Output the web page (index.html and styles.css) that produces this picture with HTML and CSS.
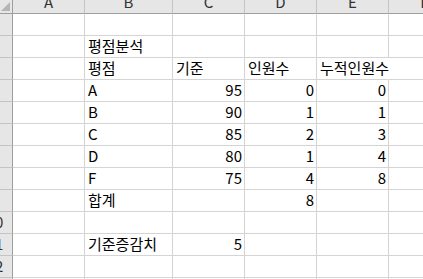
FILE: index.html
```html
<!DOCTYPE html>
<html lang="ko">
<head>
<meta charset="utf-8">
<link rel="stylesheet" href="styles.css">
</head>
<body>
<div class="sheet">
  <div class="corner"><span class="tri"></span></div>
  <div class="colhdr">A</div><div class="colhdr">B</div><div class="colhdr">C</div><div class="colhdr">D</div><div class="colhdr">E</div><div class="colhdr">F</div>

  <div class="rowhdr">1</div><div class="cell"></div><div class="cell"></div><div class="cell"></div><div class="cell"></div><div class="cell"></div><div class="cell"></div>
  <div class="rowhdr">2</div><div class="cell"></div><div class="cell">평점분석</div><div class="cell"></div><div class="cell"></div><div class="cell"></div><div class="cell"></div>
  <div class="rowhdr">3</div><div class="cell"></div><div class="cell">평점</div><div class="cell">기준</div><div class="cell">인원수</div><div class="cell spill">누적인원수</div><div class="cell"></div>
  <div class="rowhdr">4</div><div class="cell"></div><div class="cell">A</div><div class="cell num">95</div><div class="cell num">0</div><div class="cell num">0</div><div class="cell"></div>
  <div class="rowhdr">5</div><div class="cell"></div><div class="cell">B</div><div class="cell num">90</div><div class="cell num">1</div><div class="cell num">1</div><div class="cell"></div>
  <div class="rowhdr">6</div><div class="cell"></div><div class="cell">C</div><div class="cell num">85</div><div class="cell num">2</div><div class="cell num">3</div><div class="cell"></div>
  <div class="rowhdr">7</div><div class="cell"></div><div class="cell">D</div><div class="cell num">80</div><div class="cell num">1</div><div class="cell num">4</div><div class="cell"></div>
  <div class="rowhdr">8</div><div class="cell"></div><div class="cell">F</div><div class="cell num">75</div><div class="cell num">4</div><div class="cell num">8</div><div class="cell"></div>
  <div class="rowhdr">9</div><div class="cell"></div><div class="cell">합계</div><div class="cell"></div><div class="cell num">8</div><div class="cell"></div><div class="cell"></div>
  <div class="rowhdr">10</div><div class="cell"></div><div class="cell"></div><div class="cell"></div><div class="cell"></div><div class="cell"></div><div class="cell"></div>
  <div class="rowhdr">11</div><div class="cell"></div><div class="cell">기준증감치</div><div class="cell num">5</div><div class="cell"></div><div class="cell"></div><div class="cell"></div>
  <div class="rowhdr">12</div><div class="cell"></div><div class="cell"></div><div class="cell"></div><div class="cell"></div><div class="cell"></div><div class="cell"></div>
  <div class="rowhdr">13</div><div class="cell"></div><div class="cell"></div><div class="cell"></div><div class="cell"></div><div class="cell"></div><div class="cell"></div>
</div>
</body>
</html>
```

FILE: styles.css
```css
html, body {
  margin: 0;
  padding: 0;
  background: #ffffff;
  overflow: hidden;
}

body {
  width: 423px;
  height: 279px;
  font-family: "Noto Sans CJK KR", "Noto Sans", sans-serif;
  font-size: 15px;
  color: #000000;
}

.sheet {
  display: grid;
  grid-template-columns: 35px 72px 88px 72px 72px 72px 72px;
  grid-auto-rows: 22px;
  margin-left: -22px;
  margin-top: -8px;
  width: max-content;
}

.sheet > div {
  box-sizing: border-box;
  line-height: 20px;
  white-space: nowrap;
  overflow: visible;
}

.corner {
  background: #e6e6e6;
  border-right: 1px solid #9e9e9e;
  border-bottom: 1px solid #9e9e9e;
  display: flex;
  justify-content: flex-end;
  align-items: flex-end;
  padding: 0 2px 2px 0;
}

.tri {
  width: 0;
  height: 0;
  border-left: 9px solid transparent;
  border-bottom: 9px solid #b5b5b5;
}

.colhdr {
  background: #e6e6e6;
  border-right: 1px solid #c4c4c4;
  border-bottom: 1px solid #9e9e9e;
  text-align: center;
  color: #333333;
}

.rowhdr {
  background: #e6e6e6;
  border-right: 1px solid #9e9e9e;
  border-bottom: 1px solid #c4c4c4;
  text-align: center;
  color: #333333;
}

.cell {
  border-right: 1px solid #d4d4d4;
  border-bottom: 1px solid #d4d4d4;
  padding: 0 2px 0 3px;
}

.num {
  text-align: right;
}

.spill {
  border-right-color: transparent;
}
```
